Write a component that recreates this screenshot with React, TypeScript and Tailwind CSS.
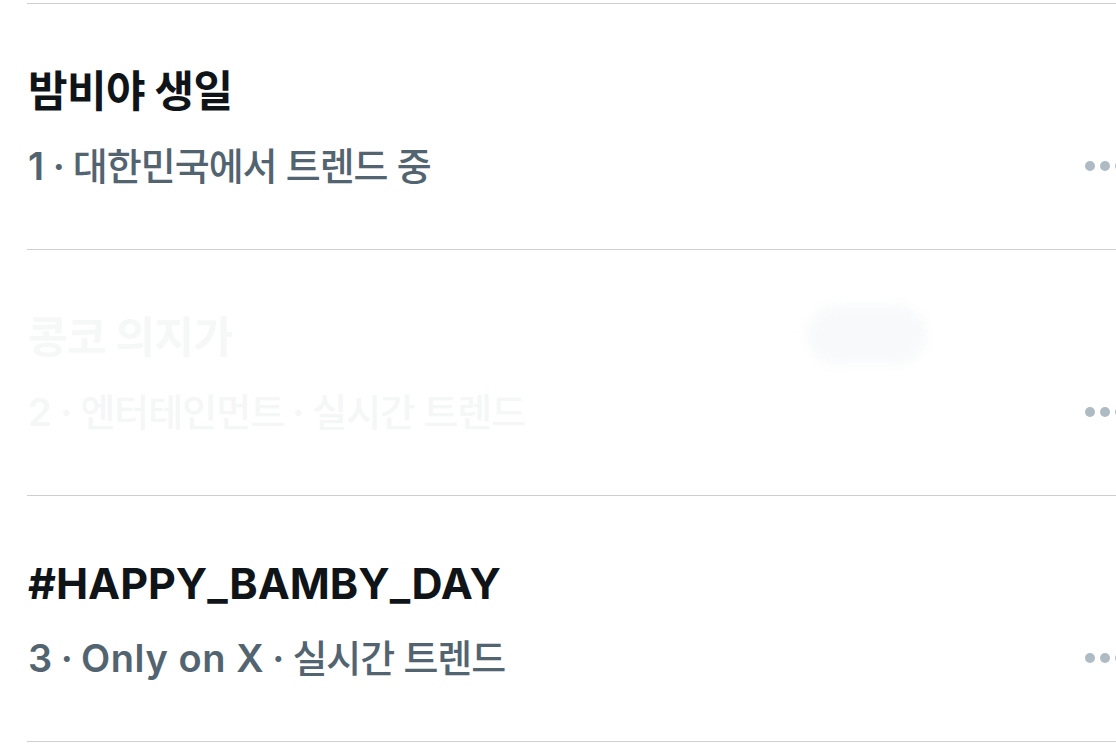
const trends = [
  { rank: 1, title: '밤비야 생일', meta: ['대한민국에서 트렌드 중'], faded: false },
  { rank: 2, title: '콩코 의지가', meta: ['엔터테인먼트', '실시간 트렌드'], faded: true },
  { rank: 3, title: '#HAPPY_BAMBY_DAY', meta: ['Only on X', '실시간 트렌드'], faded: false },
];

const isHangul = (s: string) => /[가-힣]/.test(s);

function MoreDots() {
  return (
    <div className="ml-auto mr-[-9px] flex items-center gap-[5px]">
      <span className="h-[10px] w-[10px] rounded-full bg-[#aebbc5]" />
      <span className="h-[10px] w-[10px] rounded-full bg-[#aebbc5]" />
      <span className="h-[10px] w-[10px] rounded-full bg-[#aebbc5]" />
    </div>
  );
}

function TrendRow({ rank, title, meta, faded }: (typeof trends)[number]) {
  return (
    <div className="relative h-[246px] border-t border-[#cfcfcf] pl-px pt-[61px]">
      <div
        className={`text-[43px] font-bold leading-[52px] ${
          isHangul(title) ? 'tracking-[-0.6px]' : 'tracking-[0px]'
        } ${faded ? 'text-[#f6f7f7]' : 'text-[#0f1419]'}`}
      >
        {title}
      </div>
      <div className="mt-[25px] flex h-[48px] items-center">
        <span
          className={`text-[38px] leading-[48px] ${faded ? 'text-[#f5f6f6]' : 'text-[#536471]'}`}
        >
          <span className="font-semibold tracking-[0.6px]">{rank}</span>
          {meta.map((m) => (
            <span key={m}>
              <span className="mx-[8px] font-semibold">·</span>
              <span
                className={
                  isHangul(m) ? 'font-medium tracking-[-1px]' : 'font-semibold tracking-[0.6px]'
                }
              >
                {m}
              </span>
            </span>
          ))}
        </span>
        <MoreDots />
      </div>
      {faded && (
        <div className="absolute left-[780px] top-[55px] h-[60px] w-[120px] rounded-full bg-[#eef1f4] opacity-40 blur-[6px]" />
      )}
    </div>
  );
}

export default function App() {
  return (
    <div
      className="h-[753px] w-[1116px] overflow-hidden bg-white pt-[3px]"
      style={{ fontFamily: 'Inter, "Noto Sans CJK KR", sans-serif' }}
    >
      <div className="ml-[27px] border-b border-[#cfcfcf]">
        {trends.map((t) => (
          <TrendRow key={t.rank} {...t} />
        ))}
      </div>
    </div>
  );
}
